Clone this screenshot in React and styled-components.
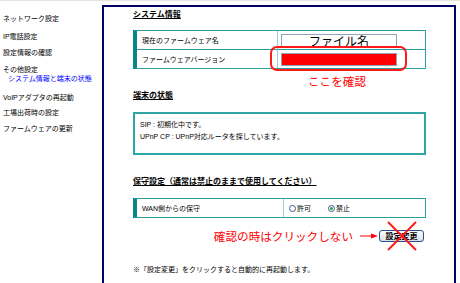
import React from 'react';
import styled, { createGlobalStyle } from 'styled-components';

const Global = createGlobalStyle`
  html, body { margin: 0; padding: 0; background: #fff; }
  body { font-family: "Liberation Sans", "Noto Sans CJK JP", sans-serif; color: #000; }
`;

const Page = styled.div`
  display: flex;
  width: 460px;
  height: 283px;
  overflow: hidden;
  border-top: 1px solid #e4e4e4;
  box-sizing: border-box;
`;

const Sidebar = styled.nav`
  flex: none;
  width: 102px;
  padding-top: 13px;
  display: flex;
  flex-direction: column;
`;

const NavItem = styled.div`
  font-size: 7px;
  line-height: 9px;
  white-space: nowrap;
  padding-left: ${p => (p.$sub ? 8 : 3)}px;
  margin-top: ${p => p.$mt || 0}px;
  color: ${p => (p.$sub ? '#0000ff' : '#000')};
`;

const Panel = styled.main`
  flex: 1;
  margin: 4px 4px 0 0;
  border: 2px solid #000066;
  border-bottom: none;
  padding: 3px 0 0 29px;
  height: 320px;
`;

const Content = styled.div`
  width: 293px;
  display: flex;
  flex-direction: column;
`;

const Heading = styled.div`
  font-size: 8px;
  line-height: 10px;
  font-weight: bold;
  text-decoration: underline;
  white-space: nowrap;
  margin-top: ${p => p.$mt || 0}px;
`;

const TableWrap = styled.div`
  position: relative;
  margin-top: ${p => p.$mt || 0}px;
`;

const Table = styled.div`
  display: grid;
  grid-template-columns: ${p => p.$label}px 1fr;
  border: 1px solid #2a9f9f;
  border-left: 4px solid #0b8585;
`;

const LabelCell = styled.div`
  display: flex;
  align-items: center;
  min-height: 18px;
  padding-left: 5px;
  font-size: 7px;
  white-space: nowrap;
  border-top: ${p => (p.$first ? 'none' : '1px solid #2a9f9f')};
`;

const ValueCell = styled.div`
  display: flex;
  align-items: center;
  gap: 17px;
  min-height: 18px;
  padding-left: ${p => p.$pad || 3}px;
  border-left: 1px solid #9fd0d0;
  border-top: ${p => (p.$first ? 'none' : '1px solid #2a9f9f')};
`;

const FieldBox = styled.div`
  box-sizing: border-box;
  width: 116px;
  height: 13px;
  border: 1px solid #8fa5bb;
  background: ${p => (p.$red ? '#ff0000' : '#fff')};
  font-family: "Noto Sans CJK JP", sans-serif;
  font-size: 12px;
  line-height: 11px;
  text-align: center;
  overflow: visible;
  white-space: nowrap;
`;

const Ring = styled.div`
  position: absolute;
  left: 137px;
  top: 16px;
  width: 137px;
  height: 25px;
  box-sizing: border-box;
  border: 2px solid #ff1a1a;
  border-radius: 7px;
`;

const RedNote = styled.div`
  font-family: "Noto Sans CJK JP", sans-serif;
  color: #ff0000;
  font-size: ${p => p.$size || 11.6}px;
  line-height: 14px;
  white-space: nowrap;
  margin-top: ${p => p.$mt || 0}px;
  margin-left: ${p => p.$ml || 0}px;
`;

const StatusBox = styled.div`
  margin-top: 11px;
  box-sizing: border-box;
  height: 43px;
  border: 2px solid #2ea5a5;
  padding: 5px 0 0 5px;
  font-size: 7px;
  line-height: 12px;
  white-space: nowrap;
`;

const Radio = styled.span`
  display: inline-flex;
  align-items: center;
  gap: 1px;
  font-size: 7px;
  white-space: nowrap;
`;

const RadioDot = styled.span`
  box-sizing: border-box;
  width: 7px;
  height: 7px;
  border-radius: 50%;
  border: 1px solid #3a5c9c;
  background: #fff;
  display: inline-flex;
  align-items: center;
  justify-content: center;
  &::after {
    content: '';
    width: 3px;
    height: 3px;
    border-radius: 50%;
    background: ${p => (p.$on ? '#22aa22' : 'transparent')};
  }
`;

const ActionRow = styled.div`
  margin-top: 10px;
  height: 16px;
  display: flex;
  justify-content: flex-end;
  align-items: center;
  padding-right: 2px;
`;

const Arrow = styled.svg`
  margin-left: 7px;
  flex: none;
`;

const ButtonWrap = styled.div`
  position: relative;
  margin-left: 1px;
`;

const Button = styled.button`
  box-sizing: border-box;
  width: 45px;
  height: 12px;
  padding: 0;
  border: 1px solid #2b4f8f;
  border-radius: 3px;
  background: linear-gradient(#ffffff, #dcdde4);
  font-family: "Noto Sans CJK JP", sans-serif;
  font-size: 8px;
  line-height: 10px;
  font-weight: bold;
  color: #000;
  display: flex;
  align-items: center;
  justify-content: center;
`;

const Cross = styled.svg`
  position: absolute;
  left: 8px;
  top: -9px;
`;

const Footnote = styled.div`
  margin-top: 21px;
  font-size: 7px;
  line-height: 10px;
  white-space: nowrap;
`;

export default function App() {
  return (
    <>
      <Global />
      <Page>
        <Sidebar>
          <NavItem>ネットワーク設定</NavItem>
          <NavItem $mt={9}>IP電話設定</NavItem>
          <NavItem $mt={7}>設定情報の確認</NavItem>
          <NavItem $mt={8}>その他設定</NavItem>
          <NavItem $sub>システム情報と端末の状態</NavItem>
          <NavItem $mt={10}>VoIPアダプタの再起動</NavItem>
          <NavItem $mt={6}>工場出荷時の設定</NavItem>
          <NavItem $mt={7}>ファームウェアの更新</NavItem>
        </Sidebar>
        <Panel>
          <Content>
            <Heading>システム情報</Heading>
            <TableWrap $mt={10}>
              <Table $label={140}>
                <LabelCell $first>現在のファームウェア名</LabelCell>
                <ValueCell $first>
                  <FieldBox>ファイル名</FieldBox>
                </ValueCell>
                <LabelCell>ファームウェアバージョン</LabelCell>
                <ValueCell>
                  <FieldBox $red />
                </ValueCell>
              </Table>
              <Ring />
            </TableWrap>
            <RedNote $mt={5} $ml={175}>ここを確認</RedNote>
            <Heading $mt={3}>端末の状態</Heading>
            <StatusBox>
              <div>SIP : 初期化中です。</div>
              <div>UPnP CP : UPnP対応ルータを探しています。</div>
            </StatusBox>
            <Heading $mt={22}>保守設定（通常は禁止のままで使用してください）</Heading>
            <TableWrap $mt={11}>
              <Table $label={146}>
                <LabelCell $first>WAN側からの保守</LabelCell>
                <ValueCell $first $pad={5}>
                  <Radio><RadioDot />許可</Radio>
                  <Radio><RadioDot $on />禁止</Radio>
                </ValueCell>
              </Table>
            </TableWrap>
            <ActionRow>
              <RedNote>確認の時はクリックしない</RedNote>
              <Arrow width="18" height="8" viewBox="0 0 18 8">
                <line x1="0" y1="4" x2="12" y2="4" stroke="#ff0000" strokeWidth="1" />
                <polygon points="11,1.5 18,4 11,6.5" fill="#ff0000" />
              </Arrow>
              <ButtonWrap>
                <Button>設定変更</Button>
                <Cross width="30" height="30" viewBox="0 0 30 30">
                  <line x1="1" y1="1" x2="29" y2="29" stroke="#ff1a1a" strokeWidth="2" />
                  <line x1="29" y1="1" x2="1" y2="29" stroke="#ff1a1a" strokeWidth="2" />
                </Cross>
              </ButtonWrap>
            </ActionRow>
            <Footnote>※「設定変更」をクリックすると自動的に再起動します。</Footnote>
          </Content>
        </Panel>
      </Page>
    </>
  );
}
